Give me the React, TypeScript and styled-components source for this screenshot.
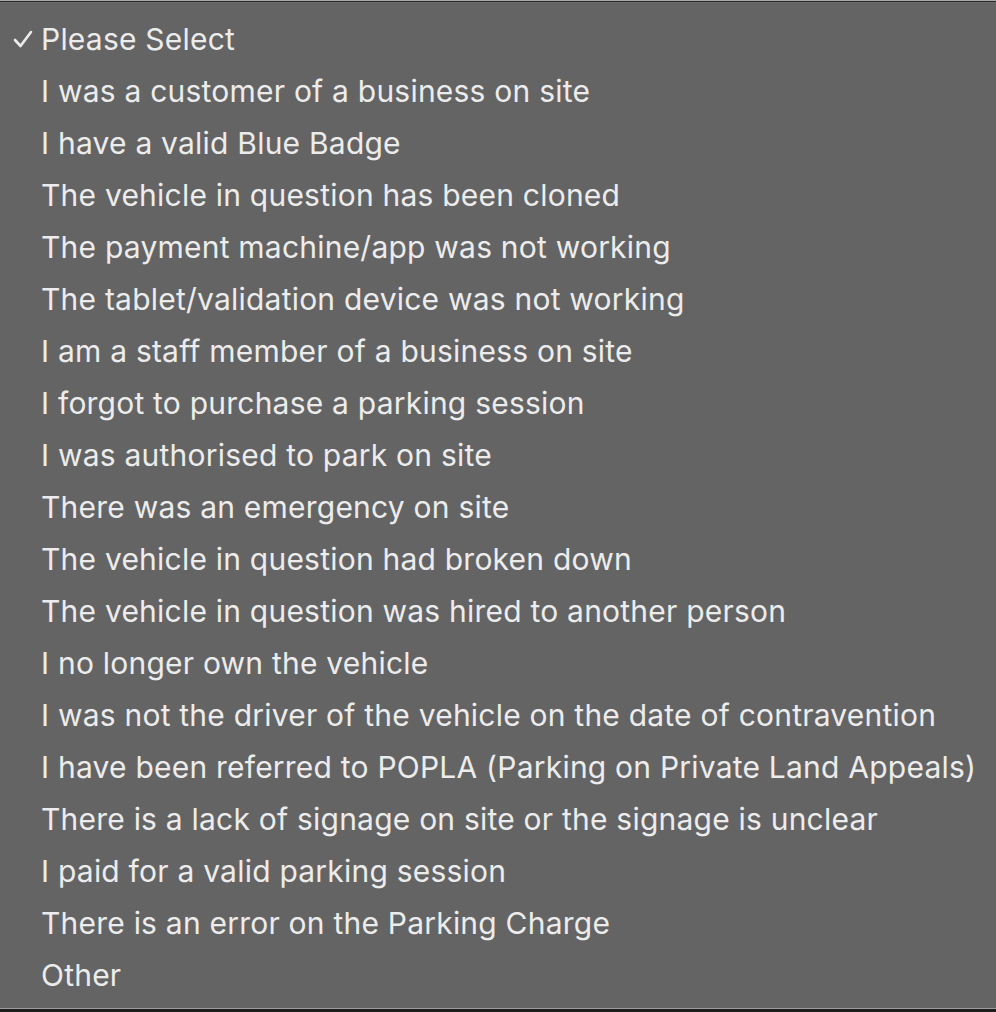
import React from 'react';
import styled, { createGlobalStyle } from 'styled-components';

const GlobalStyle = createGlobalStyle`
  html, body {
    margin: 0;
    padding: 0;
    background: #646464;
  }
`;

const options = [
  'Please Select',
  'I was a customer of a business on site',
  'I have a valid Blue Badge',
  'The vehicle in question has been cloned',
  'The payment machine/app was not working',
  'The tablet/validation device was not working',
  'I am a staff member of a business on site',
  'I forgot to purchase a parking session',
  'I was authorised to park on site',
  'There was an emergency on site',
  'The vehicle in question had broken down',
  'The vehicle in question was hired to another person',
  'I no longer own the vehicle',
  'I was not the driver of the vehicle on the date of contravention',
  'I have been referred to POPLA (Parking on Private Land Appeals)',
  'There is a lack of signage on site or the signage is unclear',
  'I paid for a valid parking session',
  'There is an error on the Parking Charge',
  'Other',
];

const Menu = styled.div`
  box-sizing: border-box;
  width: 996px;
  height: 1012px;
  background: #646464;
  border-top: 1px solid #a8a8a8;
  box-shadow: inset 0 1px 0 #2a2a2a, inset 0 2px 0 #6c6c6c;
  display: flex;
  flex-direction: column;
  padding-top: 12px;
  position: relative;
  font-family: Inter, 'Noto Sans', 'Liberation Sans', sans-serif;

  &::after {
    content: '';
    position: absolute;
    left: 0;
    right: 0;
    bottom: 0;
    height: 3px;
    background: #1e1e1e;
    border-top: 1px solid #9c9c9c;
  }
`;

const Option = styled.div`
  height: 52px;
  display: flex;
  align-items: center;
  color: #ececec;
  font-size: 30px;
  letter-spacing: 0.22px;
  white-space: nowrap;
`;

const Check = styled.span`
  width: 41px;
  flex: none;
  display: flex;
  justify-content: center;
  padding-left: 4px;
  box-sizing: border-box;

  svg {
    width: 20px;
    height: 18px;
  }
`;

const CheckMark = () => (
  <svg viewBox="0 0 20 18" fill="none">
    <path
      d="M2 10 L7.5 16 L18 2"
      stroke="#ececec"
      strokeWidth="2.6"
      strokeLinecap="round"
      strokeLinejoin="round"
    />
  </svg>
);

export default function App() {
  return (
    <>
      <GlobalStyle />
      <Menu>
        {options.map((label, i) => (
          <Option key={label}>
            <Check>{i === 0 && <CheckMark />}</Check>
            {label}
          </Option>
        ))}
      </Menu>
    </>
  );
}
